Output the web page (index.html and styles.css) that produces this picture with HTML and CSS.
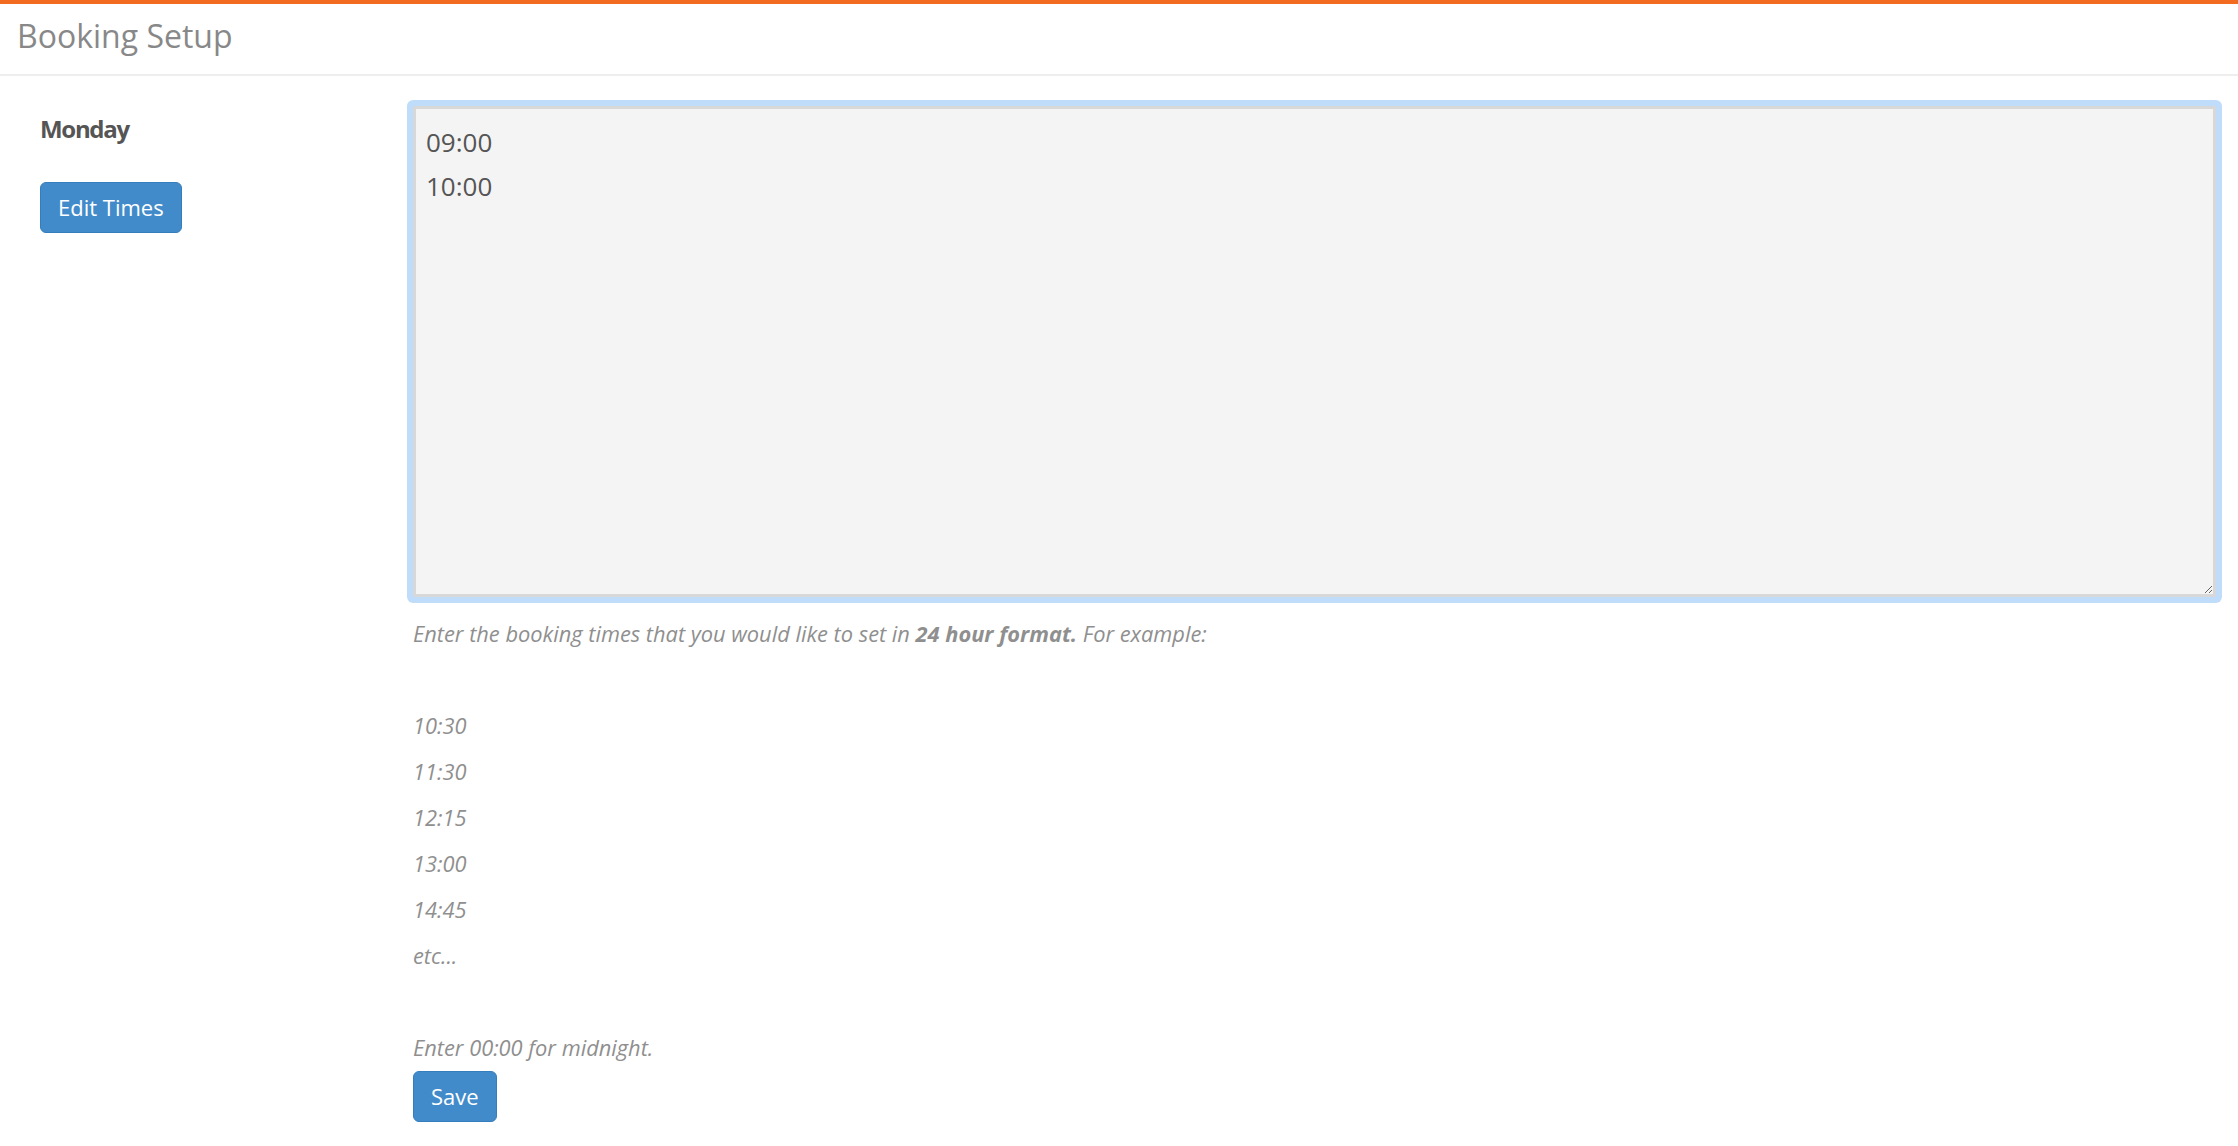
FILE: index.html
```html
<!DOCTYPE html>
<html lang="en">
<head>
  <meta charset="UTF-8">
  <title>Booking Setup</title>
  <link rel="stylesheet" href="styles.css">
</head>
<body>
  <div class="topbar"></div>
  <div class="page-header">
    <h1 class="title">Booking Setup</h1>
  </div>

  <div class="main">
    <div class="side">
      <h4 class="day">Monday</h4>
      <button class="btn">Edit Times</button>
    </div>

    <div class="content">
      <textarea class="times">09:00
10:00</textarea>
      <div class="help">
        Enter the booking times that you would like to set in <b>24 hour format.</b> For example:<br>
        <br>
        10:30<br>
        11:30<br>
        12:15<br>
        13:00<br>
        14:45<br>
        etc...<br>
        <br>
        Enter 00:00 for midnight.
      </div>
      <button class="btn">Save</button>
    </div>
  </div>
</body>
</html>
```

FILE: styles.css
```css
body {
  margin: 0;
  font-family: "Open Sans", Arial, sans-serif;
  color: #555;
  background: #fff;
}
.topbar {
  height: 4px;
  background: #f36b21;
}
.page-header {
  border-bottom: 2px solid #eeeeee;
  padding: 0 17px 6px;
}
.title {
  margin: 0;
  font-size: 32px;
  font-weight: normal;
  line-height: 64px;
  color: #888;
}
.main {
  display: grid;
  grid-template-columns: 373px 1fr;
  padding: 30px 22px 0 40px;
}
.day {
  margin: 8px 0 39px;
  font-size: 24px;
  font-weight: 700;
  line-height: 29px;
  letter-spacing: -1.3px;
  color: #555;
}
.btn {
  font-family: "Open Sans", Arial, sans-serif;
  font-size: 22px;
  line-height: 29px;
  color: #fff;
  background: #428bca;
  border: 1px solid #357ebd;
  border-radius: 6px;
  padding: 10px 17px;
}
.times {
  display: block;
  box-sizing: border-box;
  width: 100%;
  height: 491px;
  margin: 0;
  padding: 11px 10px;
  font-family: "Open Sans", Arial, sans-serif;
  font-size: 26px;
  line-height: 44px;
  color: #555;
  background: #f4f4f4;
  border: 3px solid #d8d8d8;
  border-radius: 2px;
  box-shadow: 0 0 0 6px #bfdcfb;
  outline: none;
}
.help {
  margin-top: 14px;
  font-size: 21.8px;
  font-style: italic;
  line-height: 46px;
  color: #8f8f8f;
}
```
